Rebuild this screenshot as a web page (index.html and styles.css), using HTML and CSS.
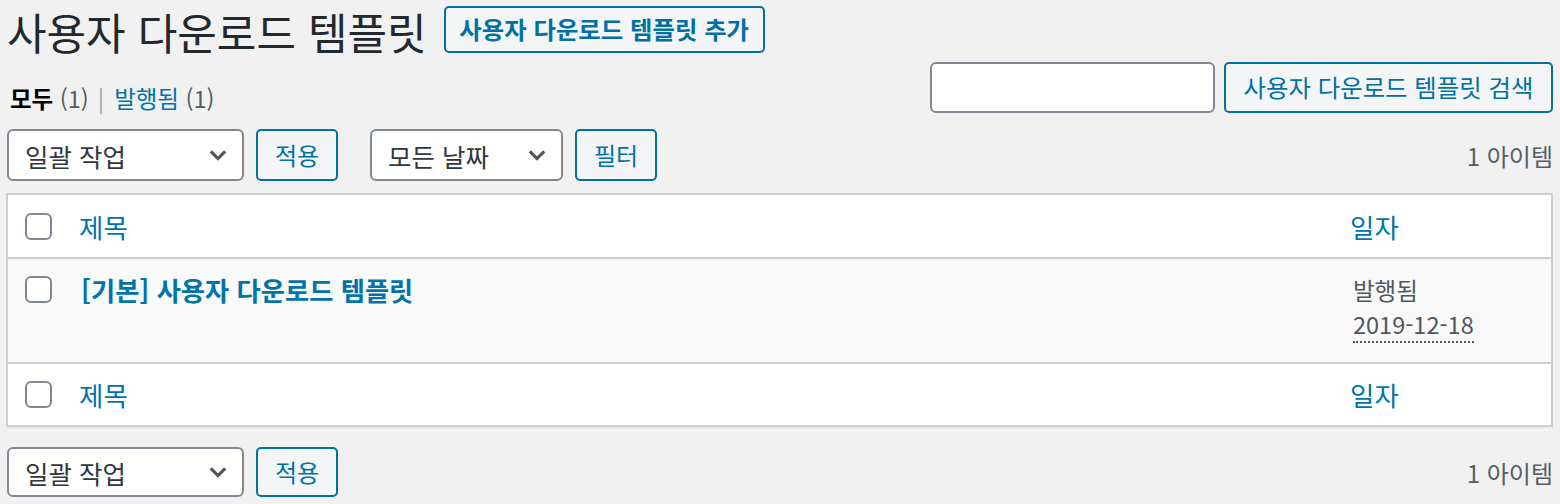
FILE: index.html
```html
<!DOCTYPE html>
<html lang="ko">
<head>
<meta charset="utf-8">
<title>사용자 다운로드 템플릿</title>
<link rel="stylesheet" href="styles.css">
</head>
<body>
<div class="wrap">
  <div class="head">
    <h1 class="page-title">사용자 다운로드 템플릿</h1>
    <a class="btn title-action" href="#">사용자 다운로드 템플릿 추가</a>
  </div>

  <div class="top-area">
    <ul class="subsubsub">
      <li><a class="current" href="#">모두 <span class="count">(1)</span></a></li>
      <li class="sep">|</li>
      <li><a href="#">발행됨 <span class="count">(1)</span></a></li>
    </ul>
    <div class="search-box">
      <input class="search-input" type="search" aria-label="검색">
      <button class="btn search-btn">사용자 다운로드 템플릿 검색</button>
    </div>
  </div>

  <div class="tablenav">
    <div class="actions">
      <div class="select bulk">일괄 작업<svg class="chev" viewBox="0 0 20 20"><path d="M4 7l6 6 6-6"/></svg></div>
      <button class="btn small">적용</button>
      <div class="select dates">모든 날짜<svg class="chev" viewBox="0 0 20 20"><path d="M4 7l6 6 6-6"/></svg></div>
      <button class="btn small">필터</button>
    </div>
    <div class="num">1 아이템</div>
  </div>

  <table class="list">
    <thead>
      <tr class="hrow">
        <td class="cb"><span class="check"></span></td>
        <th class="col-title"><a href="#">제목</a></th>
        <th class="col-date"><a href="#">일자</a></th>
      </tr>
    </thead>
    <tbody>
      <tr class="brow">
        <td class="cb"><span class="check"></span></td>
        <td class="col-title"><a class="row-title" href="#">[기본] 사용자 다운로드 템플릿</a></td>
        <td class="col-date">발행됨<br><abbr title="2019/12/18">2019-12-18</abbr></td>
      </tr>
    </tbody>
    <tfoot>
      <tr class="frow">
        <td class="cb"><span class="check"></span></td>
        <th class="col-title"><a href="#">제목</a></th>
        <th class="col-date"><a href="#">일자</a></th>
      </tr>
    </tfoot>
  </table>

  <div class="tablenav bottom">
    <div class="actions">
      <div class="select bulk">일괄 작업<svg class="chev" viewBox="0 0 20 20"><path d="M4 7l6 6 6-6"/></svg></div>
      <button class="btn small">적용</button>
    </div>
    <div class="num">1 아이템</div>
  </div>
</div>
</body>
</html>
```

FILE: styles.css
```css
* { box-sizing: border-box; }
html, body { margin: 0; padding: 0; }
body {
  background: #f1f1f1;
  color: #444;
  font-family: "Noto Sans CJK KR", "Noto Sans", "Liberation Sans", sans-serif;
  font-size: 24px;
  width: 1560px;
  height: 504px;
  overflow: hidden;
}
a { text-decoration: none; color: #0073aa; }

.wrap { padding: 6px 7px 0 6px; }

.head { display: flex; align-items: center; height: 47px; }
.page-title {
  margin: 0 17px 0 1px;
  font-size: 43px;
  font-weight: 400;
  color: #23282d;
  line-height: 47px;
  position: relative;
  top: 2px;
}

.btn {
  display: inline-flex;
  align-items: center;
  justify-content: center;
  background: #f3f5f6;
  border: 2px solid #0071a1;
  border-radius: 5px;
  color: #0071a1;
  font-family: inherit;
  font-size: 24.4px;
  padding: 0;
  margin: 0;
  line-height: 1;
}
.title-action { width: 321px; height: 47px; font-weight: 600; }

.top-area { display: flex; justify-content: space-between; margin-top: 9px; height: 51px; }
.subsubsub {
  list-style: none;
  margin: 22px 0 0 4px;
  padding: 0;
  display: flex;
  line-height: 29px;
  height: 29px;
  font-size: 23.5px;
}
.subsubsub li { display: block; }
.subsubsub .sep { color: #a0a5aa; margin: 0 10px 0 9px; }
.subsubsub .current { color: #000; font-weight: 600; }
.count { color: #555d66; font-weight: 400; }

.search-box { display: flex; gap: 9px; }
.search-input {
  width: 285px;
  height: 51px;
  border: 2px solid #7e8993;
  border-radius: 6px;
  background: #fff;
  margin: 0;
}
.search-btn { width: 329px; height: 51px; }

.tablenav {
  display: flex;
  justify-content: space-between;
  align-items: center;
  margin-top: 16px;
  height: 52px;
}
.tablenav.bottom { margin-top: 20px; height: 50px; }
.actions { display: flex; align-items: stretch; height: 100%; margin-left: 1px; }
.select {
  display: flex;
  align-items: center;
  justify-content: space-between;
  background: #fff;
  border: 2px solid #7e8993;
  border-radius: 6px;
  color: #32373c;
  padding: 0 12px 0 16px;
  font-size: 25.5px;
}
.select.bulk { width: 237px; }
.select.dates { width: 193px; margin-left: 32px; }
.chev { width: 24px; height: 24px; fill: none; stroke: #555; stroke-width: 2.6; }
.btn.small { width: 82px; margin-left: 12px; font-size: 24px; }
.num { color: #555d66; font-size: 24px; }

.list {
  width: 100%;
  border-collapse: collapse;
  margin-top: 12px;
  background: #fff;
  border: 2px solid #ccd0d4;
  box-shadow: 0 1px 1px rgba(0,0,0,.04);
}
.list th, .list td { padding: 0; text-align: left; font-weight: 400; vertical-align: middle; }
.hrow { height: 64px; border-bottom: 2px solid #ccd0d4; }
.frow { height: 63px; border-top: 2px solid #ccd0d4; }
.brow { height: 105px; background: #f9f9f9; }
.brow td { vertical-align: top; padding-top: 14px; }
.cb { width: 72px; padding-left: 17px !important; }
.check {
  display: block;
  width: 27px;
  height: 27px;
  border: 2px solid #7e8993;
  border-radius: 6px;
  background: #fff;
}
.brow .cb { padding-top: 17px; }
.col-title { font-size: 26.5px; }
.col-title a { color: #0073aa; }
.brow .col-title { padding-top: 11px; }
.col-date { width: 202px; font-size: 26.5px; }
.col-date a { color: #0073aa; }
.row-title { font-weight: 700; font-size: 26.3px; line-height: 34px; padding-left: 2px; }
.brow .col-date { color: #50575e; font-size: 23.5px; line-height: 34px; padding-left: 3px; }
abbr { text-decoration: none; border-bottom: 2px dotted #50575e; }
```
